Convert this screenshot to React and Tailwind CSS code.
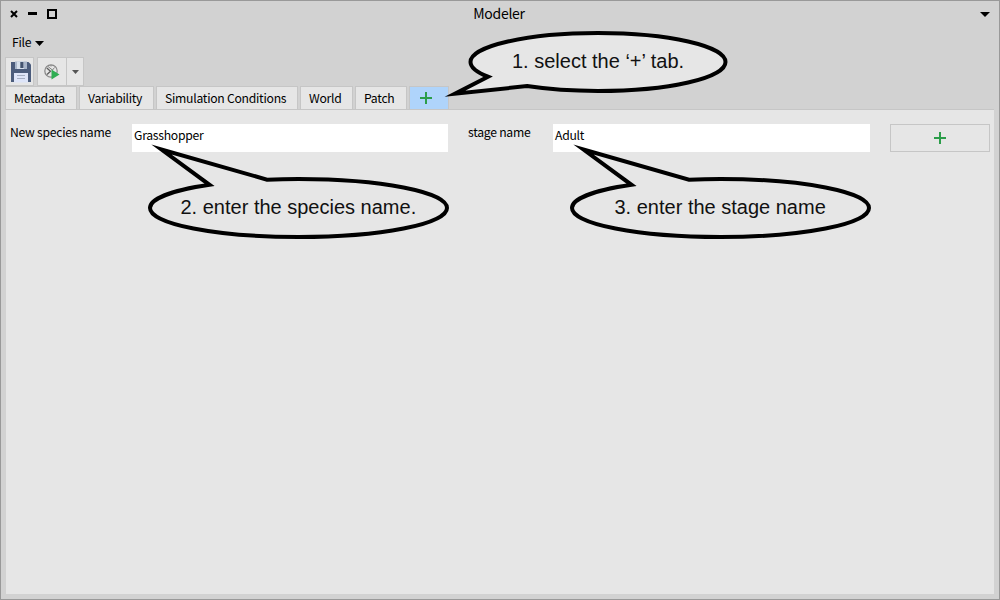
const tabs = [
  { label: "Metadata", cls: "w-[72px] pl-2" },
  { label: "Variability", cls: "w-[75px] pl-2" },
  { label: "Simulation Conditions", cls: "w-[142px] pl-2" },
  { label: "World", cls: "w-[53px] pl-2" },
  { label: "Patch", cls: "w-[52px] pl-2" },
];

function Plus() {
  return (
    <svg className="block h-3 w-3" viewBox="0 0 12 12" fill="#2b9d49" shapeRendering="crispEdges">
      <path d="M5 0h2v5h5v2H7v5H5V7H0V5h5z" />
    </svg>
  );
}

function SaveIcon() {
  return (
    <svg className="block h-[22px] w-[22px]" viewBox="0 0 22 22">
      <path d="M1 1h17.5L21 3.500v17.500H1z" fill="#4b5c7c" />
      <path d="M5 0.500h12v7.500H5z" fill="#a9b6ca" />
      <path d="M7 0.500h7v7.500H7z" fill="#d7e0ec" />
      <path d="M10.300 1h3.200v6h-3.200z" fill="#43536f" />
      <path d="M4 12h14v9.500H4z" fill="#dde4f8" />
      <path d="M7 14.500h8M7 17.500h8" stroke="#a4aec2" />
    </svg>
  );
}

function RunIcon() {
  return (
    <svg className="block h-4 w-4" viewBox="0 0 16 16" fill="none">
      <circle cx="7" cy="7" r="6.200" stroke="#858585" strokeWidth="1.200" />
      <path d="M2.800 4l3.700 3.200L3 10.500" stroke="#5e5e5e" strokeWidth="1.300" />
      <path d="M4 2.500l5 4M10.500 3.500l-2 2.500M7 1v1.500" stroke="#858585" />
      <path d="M7.500 5.500l8 5-8 5z" fill="#2fae53" />
    </svg>
  );
}

function Bubble({ d, text, box, textCls }) {
  return (
    <div className={"absolute " + box}>
      <svg className="absolute inset-0 h-full w-full overflow-visible">
        <path d={d} fill="#e6e6e6" stroke="#000" strokeWidth="4" strokeLinejoin="miter" strokeMiterlimit="20" />
      </svg>
      <span className={"absolute whitespace-nowrap font-['Liberation_Sans',sans-serif] text-[20px] leading-6 text-[#111] " + textCls}>
        {text}
      </span>
    </div>
  );
}

const TAIL_BOTTOM =
  "M18 43.660 A127.500 29 0 0 1 0.500 29 A127.500 29 0 0 1 128 0 A127.500 29 0 0 1 255.500 29 A127.500 29 0 0 1 128 58 A127.500 29 0 0 1 57 53.100 L-15 60.700 Z";
const TAIL_TOP =
  "M59.500 5.780 A148.500 29 0 0 0 0 29 A148.500 29 0 0 0 148.500 58 A148.500 29 0 0 0 297 29 A148.500 29 0 0 0 148.500 0 A148.500 29 0 0 0 117 0.660 L11.500 -29.500 Z";

export default function App() {
  return (
    <div className="relative flex h-[600px] w-[1000px] flex-col overflow-hidden border border-[#999] bg-[#d2d2d2] px-[5px] pb-[5px] font-['Noto_Sans_CJK_SC',sans-serif] text-[12.2px] tracking-[-0.27px] text-black">
      <div className="grid h-[27px] grid-cols-3 items-center pb-[2px]">
        <div className="flex items-center gap-[9px] pl-1">
          <svg className="h-2 w-2" viewBox="0 0 8 8">
            <path d="M1 1l6 6M7 1L1 7" stroke="#000" strokeWidth="2" />
          </svg>
          <span className="ml-[1px] h-[3px] w-[9px] bg-black" />
          <span className="ml-[1px] h-[10px] w-[10px] border-2 border-black" />
        </div>
        <div className="pb-[2px] pr-[2px] text-center text-[14px] leading-5">Modeler</div>
        <div className="flex justify-end pr-1">
          <svg className="mt-[1px] h-[5px] w-[10px]" viewBox="0 0 10 5">
            <path d="M0 0h10L5 5z" />
          </svg>
        </div>
      </div>

      <div className="flex h-[29px] items-center gap-1 pl-[6px]">
        <span className="pb-[2px] leading-4">File</span>
        <svg className="mt-[2px] h-[5px] w-[9px]" viewBox="0 0 9 5">
          <path d="M0 0h9L4.500 5z" />
        </svg>
      </div>

      <div className="-ml-px flex h-[29px]">
        <div className="flex w-[29px] items-center justify-center border border-[#c6c6c6] bg-[#e6e6e6] pl-[3px]">
          <SaveIcon />
        </div>
        <div className="ml-[3px] flex w-[30px] items-center justify-center border border-[#c6c6c6] bg-[#e6e6e6] pr-px">
          <RunIcon />
        </div>
        <div className="flex w-[17px] items-center justify-center border border-l-0 border-[#c6c6c6] bg-[#e6e6e6]">
          <svg className="h-1 w-[7px]" viewBox="0 0 7 4">
            <path d="M0 0h7L3.500 4z" fill="#555" />
          </svg>
        </div>
      </div>

      <div className="-ml-px flex h-6 gap-[2px] border-b border-[#c6c6c6]">
        {tabs.map((t) => (
          <div
            key={t.label}
            className={"flex shrink-0 items-center whitespace-nowrap border border-b-0 border-[#c6c6c6] bg-[#e6e6e6] leading-4 " + t.cls}
          >
            {t.label}
          </div>
        ))}
        <div className="flex w-10 shrink-0 items-center border border-b-0 border-[#c6c6c6] bg-[#afd4fb] pl-[10px]">
          <Plus />
        </div>
      </div>

      <div className="flex flex-1 items-start bg-[#e6e6e6] pl-1 pr-1 pt-[14px]">
        <label className="w-[122px] leading-4">New species name</label>
        <div className="h-7 w-[316px] bg-white pl-[2px] pt-[3px] leading-4">Grasshopper</div>
        <label className="ml-5 w-[85px] leading-4">stage name</label>
        <div className="h-7 w-[317px] bg-white pl-[2px] pt-[3px] leading-4">Adult</div>
        <button className="ml-5 flex h-7 w-[100px] items-center justify-center border border-[#c6c6c6]">
          <Plus />
        </button>
      </div>

      <Bubble
        box="left-[469px] top-[32px] h-[58px] w-[256px] tracking-normal"
        d={TAIL_BOTTOM}
        text="1. select the ‘+’ tab."
        textCls="left-[42px] top-[16px]"
      />
      <Bubble
        box="left-[149px] top-[178px] h-[58px] w-[297px] tracking-normal"
        d={TAIL_TOP}
        text="2. enter the species name."
        textCls="left-[30.5px] top-[16px]"
      />
      <Bubble
        box="left-[571px] top-[178px] h-[58px] w-[297px] tracking-normal"
        d={TAIL_TOP}
        text="3. enter the stage name"
        textCls="left-[42.5px] top-[16px]"
      />
    </div>
  );
}
